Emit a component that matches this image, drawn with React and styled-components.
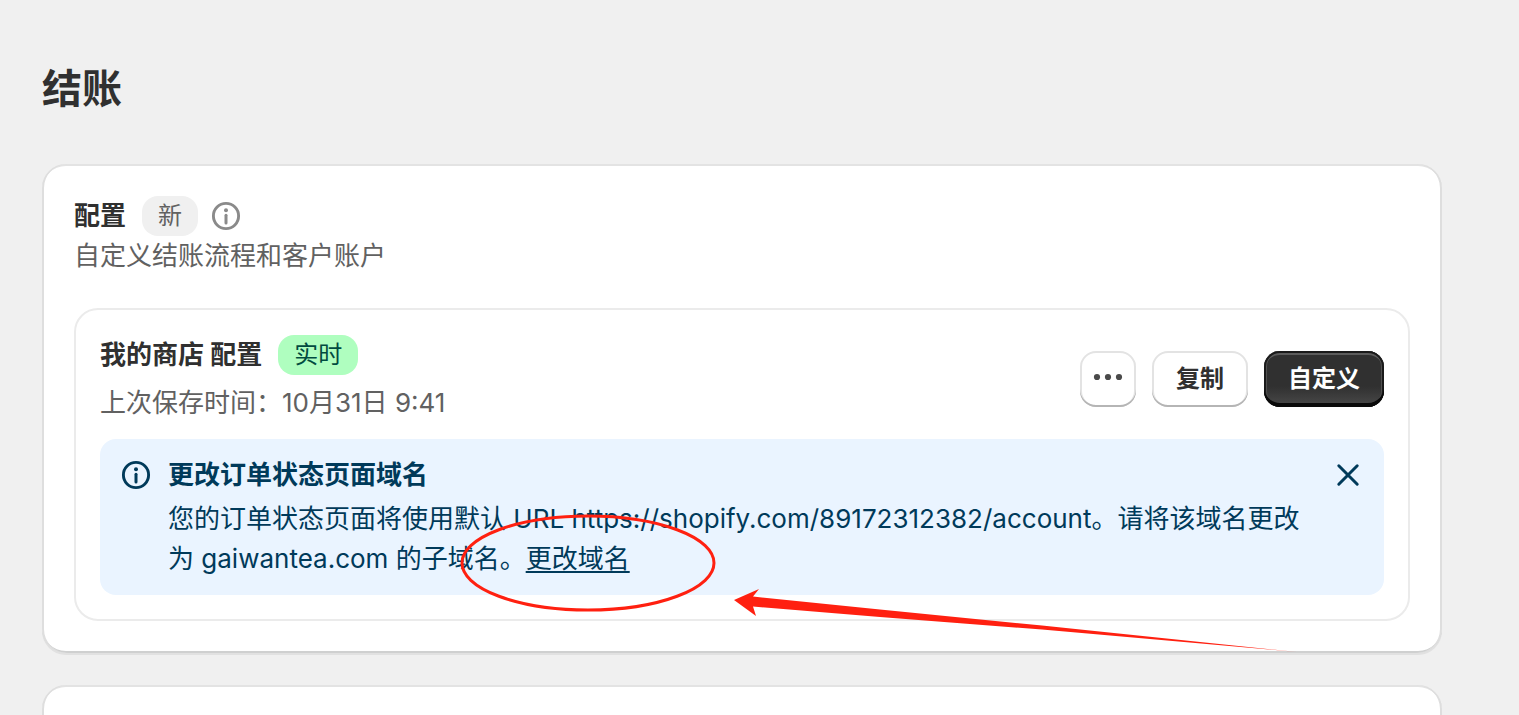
import React from 'react'
import styled, { createGlobalStyle, css } from 'styled-components'

const GlobalStyle = createGlobalStyle`
* {
    box-sizing: border-box;
}
body {
    margin: 0;
    background: #f0f0f0;
    color: #303030;
    font-family: Inter, "Noto Sans CJK SC", sans-serif;
    font-size: 26px;
    line-height: 40px;
}
`

const Page = styled.main`
display: flex;
flex-direction: column;
gap: 32px;
height: 100vh;
overflow: hidden;
padding: 64px 77px 0 42px;
`

const PageTitle = styled.h1`
margin: 0 0 18px;
font-size: 40px;
font-weight: 700;
line-height: 50px;
`

const Card = styled.section`
position: relative;
flex-shrink: 0;
min-height: 200px;
padding: 32px;
border-radius: 24px;
background: #fff;
box-shadow:
    inset 2px 0 0 #dedede,
    inset -2px 0 0 #dedede,
    inset 0 -2px 0 #cfd0d0,
    inset 0 2px 0 #e3e3e3,
    0 2px 0 #e1e1e1;
`

const Row = styled.div`
display: flex;
align-items: center;
`

const Heading = styled.h2`
margin: 0;
font-size: 26px;
font-weight: 700;
line-height: 40px;
`

const Badge = styled.span`
margin-left: 16px;
padding: 0 16px;
border-radius: 16px;
font-size: 24px;
line-height: 40px;
background: ${({ $live }) => ($live ? '#affebf' : '#f0f0f0')};
color: ${({ $live }) => ($live ? '#014b40' : '#616161')};
`

const Muted = styled.p`
margin: 0;
color: #616161;
`

const Profile = styled.article`
margin-top: 32px;
padding: 25px 24px 24px;
border: 2px solid #ebebeb;
border-radius: 24px;
`

const ProfileHeader = styled.header`
display: flex;
align-items: center;
justify-content: space-between;
margin-bottom: 16px;
`

const ProfileInfo = styled.div`
display: flex;
flex-direction: column;
gap: 8px;
`

const Actions = styled.div`
display: flex;
gap: 16px;
`

const Button = styled.button`
display: flex;
align-items: center;
justify-content: center;
min-width: 56px;
height: 56px;
padding: 0 ${({ $icon }) => ($icon ? 0 : 24)}px;
border: 0;
border-radius: 16px;
background: #fff;
color: #303030;
font-family: inherit;
font-size: 24px;
font-weight: 700;
line-height: 40px;
cursor: pointer;
box-shadow:
    inset 0 -2px 0 #b5b5b5,
    inset 0 0 0 2px #e3e3e3;
${({ $primary }) => $primary && css`
    background: linear-gradient(180deg, #303030 63%, #4a4a4a 100%);
    color: #fff;
    box-shadow:
        inset 0 -4px 0 #0a0a0a,
        inset 0 0 0 2px #1a1a1a,
        inset 0 4px 0 #5c5c5c,
        inset 3px 0 0 #505050,
        inset -3px 0 0 #505050;
`}
`

const Banner = styled.div`
display: flex;
gap: 12px;
padding: 16px;
border-radius: 16px;
background: #eaf4ff;
color: #003a5a;
`

const BannerBody = styled.div`
flex: 1;
min-width: 0;
`

const BannerText = styled.p`
margin: 4px 0 0;
`

const Link = styled.a`
color: inherit;
text-decoration: underline;
text-decoration-thickness: 2px;
text-underline-offset: 3px;
`

const CloseButton = styled.button`
flex-shrink: 0;
width: 40px;
height: 40px;
padding: 0;
border: 0;
background: none;
color: inherit;
cursor: pointer;
`

const Tip = styled.span`
display: flex;
margin-left: 8px;
color: #8a8a8a;
`

const Icon = styled.svg`
display: block;
flex-shrink: 0;
width: 40px;
height: 40px;
fill: none;
`

// Hand drawn marks lying over the banner
const Annotation = styled.svg`
position: absolute;
top: 0;
left: 0;
pointer-events: none;
`

const InfoIcon = () => (
    <Icon viewBox="0 0 40 40" aria-hidden="true">
        <circle cx="20" cy="20" r="12.6" stroke="currentColor" strokeWidth="2.9" />
        <circle cx="20" cy="14.2" r="2" fill="currentColor" />
        <path d="M20 19.3V27" stroke="currentColor" strokeWidth="3" strokeLinecap="round" />
    </Icon>
)

const DotsIcon = () => (
    <Icon viewBox="0 0 40 40" aria-hidden="true">
        <circle cx="9" cy="18" r="3.1" fill="#4a4a4a" />
        <circle cx="20" cy="18" r="3.1" fill="#4a4a4a" />
        <circle cx="31" cy="18" r="3.1" fill="#4a4a4a" />
    </Icon>
)

const CloseIcon = () => (
    <Icon viewBox="0 0 40 40" aria-hidden="true">
        <path d="M10.8 10.8L29.2 29.2M29.2 10.8L10.8 29.2" stroke="currentColor" strokeWidth="3" strokeLinecap="round" />
    </Icon>
)

export default function App() {
    return (
        <>
            <GlobalStyle />
            <Page>
                <PageTitle>结账</PageTitle>
                <Card>
                    <Row>
                        <Heading>配置</Heading>
                        <Badge>新</Badge>
                        <Tip><InfoIcon /></Tip>
                    </Row>
                    <Muted>自定义结账流程和客户账户</Muted>
                    <Profile>
                        <ProfileHeader>
                            <ProfileInfo>
                                <Row>
                                    <Heading as="h3">我的商店 配置</Heading>
                                    <Badge $live>实时</Badge>
                                </Row>
                                <Muted>上次保存时间：10月31日 9:41</Muted>
                            </ProfileInfo>
                            <Actions>
                                <Button $icon aria-label="更多操作"><DotsIcon /></Button>
                                <Button>复制</Button>
                                <Button $primary>自定义</Button>
                            </Actions>
                        </ProfileHeader>
                        <Banner>
                            <InfoIcon />
                            <BannerBody>
                                <Heading as="h4">更改订单状态页面域名</Heading>
                                <BannerText>
                                    您的订单状态页面将使用默认 URL https://shopify.com/89172312382/account。请将该域名更改为 gaiwantea.com 的子域名。<Link href="#domain">更改域名</Link>
                                </BannerText>
                            </BannerBody>
                            <CloseButton aria-label="关闭"><CloseIcon /></CloseButton>
                        </Banner>
                    </Profile>
                    <Annotation width="1260" height="488" viewBox="0 0 1260 488" aria-hidden="true">
                        <ellipse cx="546" cy="399" rx="126" ry="47" fill="none" stroke="#ff2010" strokeWidth="3" />
                        <path d="M692 436L717 425L711 432.5L838 445.5L1000 461.5L1255 488L1000 465.5L838 453L711 442.5L714 452Z" fill="#ff2010" />
                    </Annotation>
                </Card>
                <Card />
            </Page>
        </>
    )
}
